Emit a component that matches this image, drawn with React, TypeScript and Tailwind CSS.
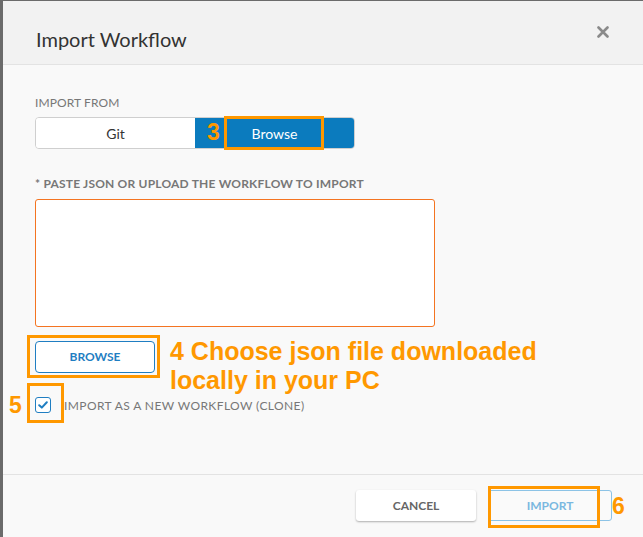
import React from 'react';

// orange highlight frames drawn over the screenshot
const Mark: React.FC<{ className: string }> = ({ className }) => (
  <div className={`pointer-events-none absolute border-[3.5px] border-[#ff9800] ${className}`} />
);

const Note: React.FC<{ className: string; children: React.ReactNode }> = ({ className, children }) => (
  <span
    className={`pointer-events-none absolute font-['Liberation_Sans',Arial,sans-serif] font-bold text-[#ff9800] ${className}`}
  >
    {children}
  </span>
);

export default function App() {
  return (
    <div className="flex h-[537px] w-[643px] bg-[#6b6b6b] pl-[3px] pt-[1px] font-['Lato',sans-serif]">
      <div className="flex flex-1 flex-col bg-[#f9f9f9]">
        {/* Header */}
        <div className="flex h-[64px] shrink-0 items-start justify-between border-b border-[#e3e3e3] bg-[#f2f2f2] pl-[33px] pr-[34px]">
          <h2 className="pt-[26px] text-[20px] leading-[24px] text-[#333]">Import Workflow</h2>
          <button type="button" className="mt-[25px] text-[#8a8a8a]" aria-label="Close">
            <svg width="12" height="12" viewBox="0 0 12 12">
              <path d="M1.5 1.5L10.5 10.5M10.5 1.5L1.5 10.5" stroke="currentColor" strokeWidth="2.6" strokeLinecap="round" />
            </svg>
          </button>
        </div>

        {/* Body */}
        <div className="relative flex-1 pl-[32px] pt-[30px]">
          <div className="text-[12px] leading-[15px] tracking-[0.1px] text-[#777]">IMPORT FROM</div>

          <div className="mt-[7px] flex h-[32px] w-[320px] overflow-hidden rounded-[4px] border border-[#cfcfcf]">
            <div className="flex flex-1 items-center justify-center bg-white text-[14px] text-[#333]">Git</div>
            <div className="relative flex flex-1 items-center justify-center bg-[#0b7bbe] text-[14px] text-white">
              Browse
            </div>
          </div>
          <Mark className="left-[221px] top-[51px] h-[34px] w-[100px]" />
          <Note className="left-[204px] top-[55px] text-[23px] leading-[24px]">3</Note>

          <div className="mt-[27px] text-[12px] font-bold leading-[15px] tracking-[0.2px] text-[#777]">
            * PASTE JSON OR UPLOAD THE WORKFLOW TO IMPORT
          </div>
          <textarea className="mt-[8px] block h-[128px] w-[400px] resize-none rounded-[3px] border border-[#f47421] bg-white outline-none" />

          <div className="relative mt-[14px]">
            <button
              type="button"
              className="flex h-[32px] w-[120px] items-center justify-center rounded-[4px] border border-[#1f7ec2] bg-white text-[12px] font-bold text-[#1f7ec2]"
            >
              BROWSE
            </button>
            <Mark className="-left-[8px] -top-[6px] h-[43px] w-[133px]" />
            <Note className="left-[135px] -top-[4px] text-[25px] leading-[29px]">
              4 Choose json file downloaded
              <br />
              locally in your PC
            </Note>
          </div>

          <div className="relative mt-[24px] flex items-center">
            <span className="flex h-[16px] w-[16px] items-center justify-center rounded-[3px] border border-[#1f7ec2] bg-white">
              <svg width="10" height="8" viewBox="0 0 10 8">
                <path d="M1.2 4.2L3.8 6.6L8.8 1.3" fill="none" stroke="#1f7ec2" strokeWidth="2" strokeLinecap="round" strokeLinejoin="round" />
              </svg>
            </span>
            <span className="ml-[13px] text-[12px] leading-[15px] tracking-[0.4px] text-[#777]">
              IMPORT AS A NEW WORKFLOW (CLONE)
            </span>
            <Mark className="-left-[8px] -top-[14px] h-[40px] w-[37px]" />
            <Note className="-left-[26px] -top-[3px] text-[23px] leading-[23px]">5</Note>
          </div>
        </div>

        {/* Footer */}
        <div className="relative flex h-[63px] shrink-0 items-start justify-end gap-[12px] border-t border-[#e3e3e3] pr-[31px] pt-[15px]">
          <button
            type="button"
            className="h-[31px] w-[120px] rounded-[3px] bg-white text-[12px] font-bold text-[#666] shadow-[0_1px_2px_rgba(0,0,0,0.3)]"
          >
            CANCEL
          </button>
          <button
            type="button"
            className="h-[31px] w-[124px] rounded-[3px] border border-[#8cc3e6] bg-[#fafafa] text-[12px] font-bold text-[#7ab8e0]"
          >
            IMPORT
          </button>
          <Mark className="left-[485px] top-[11px] h-[42px] w-[112px]" />
          <Note className="left-[609px] top-[20px] text-[23px] leading-[23px]">6</Note>
        </div>
      </div>
    </div>
  );
}
